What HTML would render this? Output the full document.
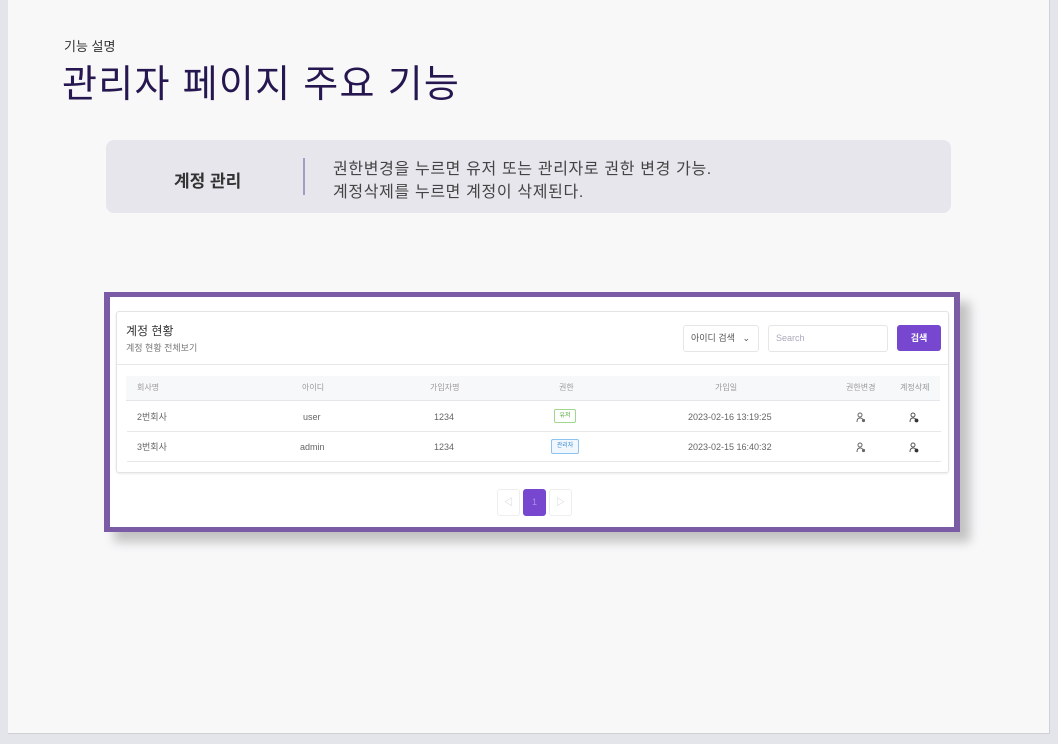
<!DOCTYPE html>
<html><head><meta charset="utf-8"><style>
*{margin:0;padding:0;box-sizing:border-box}
body{width:1058px;height:744px;background:#e4e5ea;position:relative;overflow:hidden;font-family:"Liberation Sans","Noto Sans CJK KR",sans-serif}
.slide{position:absolute;left:8px;top:0;width:1042px;height:734px;background:#f8f8f9;border-right:1px solid #cfcfd4;border-bottom:1px solid #cfcfd4}
.a{position:absolute;white-space:nowrap;line-height:1.2}
.shot{position:absolute;left:104px;top:292px;width:856px;height:240px;background:#7b5ba5;box-shadow:10px 10px 10px rgba(0,0,0,.22)}
.inner{position:absolute;left:6px;top:5px;width:844px;height:230px;background:#fff}
.card{position:absolute;left:6px;top:14px;width:833px;height:162px;border:1px solid #e3e3e6;border-radius:3px;box-shadow:0 1px 2px rgba(0,0,0,.08)}
.g{color:#666;font-size:9px;line-height:12px}
.h{color:#999;font-size:8px;line-height:10px}
.pg{position:absolute;top:192px;width:23px;height:27px;border:1px solid #eee;border-radius:3px;font-size:9px;color:#ccc;text-align:center;line-height:25px}
.line{position:absolute;left:10px;width:814px;height:1px;background:#e8e8ea}
.ic{position:absolute;width:10px;height:11px}
</style></head><body>
<div class="slide">
<div class="a" style="left:56px;top:39px;font-size:13px;color:#333">기능 설명</div>
<div class="a" style="left:54px;top:63px;font-size:38px;color:#261750;letter-spacing:1.3px">관리자 페이지 주요 기능</div>
<div class="a" style="left:98px;top:140px;width:845px;height:73px;background:#e7e6ec;border-radius:8px"></div>
<div class="a" style="left:166px;top:172px;font-size:17px;font-weight:bold;color:#333">계정 관리</div>
<div class="a" style="left:295px;top:158px;width:2px;height:37px;background:#a39cc0"></div>
<div class="a" style="left:325px;top:158px;font-size:16px;line-height:23px;color:#444;letter-spacing:0.65px">권한변경을 누르면 유저 또는 관리자로 권한 변경 가능.<br>계정삭제를 누르면 계정이 삭제된다.</div>
</div>
<div class="shot"><div class="inner">
<div class="card">
<div class="a" style="left:9px;top:12px;font-size:12px;color:#333">계정 현황</div>
<div class="a" style="left:9px;top:31px;font-size:9px;color:#777">계정 현황 전체보기</div>
<div class="a" style="left:566px;top:13px;width:76px;height:27px;border:1px solid #e6e6e6;border-radius:3px;font-size:9px;color:#555;line-height:25px;padding-left:7px">아이디 검색 <span style="position:absolute;right:8px;font-size:9px">⌄</span></div>
<div class="a" style="left:651px;top:13px;width:120px;height:27px;border:1px solid #e6e6e6;border-radius:3px;font-size:9px;color:#aab;line-height:25px;padding-left:7px">Search</div>
<div class="a" style="left:780px;top:13px;width:44px;height:26px;background:#7748cf;border-radius:3px;font-size:9px;color:#fff;line-height:26px;text-align:center;font-weight:bold">검색</div>
<div class="line" style="top:52px;left:0;width:831px"></div>
<div class="a" style="left:9px;top:64px;width:814px;height:25px;background:#f7f8fa;border-bottom:1px solid #e4e6ea"></div>
<div class="a h" style="left:20px;top:71px">회사명</div>
<div class="a h" style="left:185px;top:71px">아이디</div>
<div class="a h" style="left:313px;top:71px">가입자명</div>
<div class="a h" style="left:442px;top:71px">권한</div>
<div class="a h" style="left:598px;top:71px">가입일</div>
<div class="a h" style="left:729px;top:71px">권한변경</div>
<div class="a h" style="left:783px;top:71px">계정삭제</div>
<div class="a g" style="left:20px;top:99px">2번회사</div>
<div class="a g" style="left:186px;top:99px">user</div>
<div class="a g" style="left:317px;top:99px">1234</div>
<div class="a" style="left:437px;top:97px;width:22px;height:14px;border:1px solid #9fd88a;border-radius:2px;font-size:6px;color:#52a83a;text-align:center;line-height:12px">유저</div>
<div class="a g" style="left:571px;top:99px">2023-02-16 13:19:25</div>
<svg class="ic" style="left:739px;top:100px" viewBox="0 0 10 11"><circle cx="4" cy="3" r="2" fill="none" stroke="#666" stroke-width="1"/><path d="M1 10 Q1 6 4 6 Q6 6 6.5 7" fill="none" stroke="#666" stroke-width="1"/><circle cx="7.5" cy="8.5" r="1.6" fill="#666"/></svg>
<svg class="ic" style="left:792px;top:100px" viewBox="0 0 10 11"><circle cx="4" cy="3" r="2" fill="none" stroke="#555" stroke-width="1"/><path d="M1 10 Q1 6 4 6 Q6 6 6.5 7" fill="none" stroke="#555" stroke-width="1"/><circle cx="7.5" cy="8.5" r="1.9" fill="#333"/></svg>
<div class="line" style="top:119px"></div>
<div class="a g" style="left:20px;top:129px">3번회사</div>
<div class="a g" style="left:183px;top:129px">admin</div>
<div class="a g" style="left:317px;top:129px">1234</div>
<div class="a" style="left:434px;top:127px;width:28px;height:15px;border:1px solid #8cc4f0;border-radius:2px;font-size:6px;color:#3a86c8;text-align:center;line-height:13px;background:#f0f7ff">관리자</div>
<div class="a g" style="left:571px;top:129px">2023-02-15 16:40:32</div>
<svg class="ic" style="left:739px;top:130px" viewBox="0 0 10 11"><circle cx="4" cy="3" r="2" fill="none" stroke="#666" stroke-width="1"/><path d="M1 10 Q1 6 4 6 Q6 6 6.5 7" fill="none" stroke="#666" stroke-width="1"/><circle cx="7.5" cy="8.5" r="1.6" fill="#666"/></svg>
<svg class="ic" style="left:792px;top:130px" viewBox="0 0 10 11"><circle cx="4" cy="3" r="2" fill="none" stroke="#555" stroke-width="1"/><path d="M1 10 Q1 6 4 6 Q6 6 6.5 7" fill="none" stroke="#555" stroke-width="1"/><circle cx="7.5" cy="8.5" r="1.9" fill="#333"/></svg>
<div class="line" style="top:149px"></div>
</div>
<div class="pg" style="left:387px">◁</div>
<div class="pg" style="left:413px;background:#7748cf;border-color:#7748cf;color:#a88de8">1</div>
<div class="pg" style="left:439px">▷</div>
</div></div>
</body></html>
